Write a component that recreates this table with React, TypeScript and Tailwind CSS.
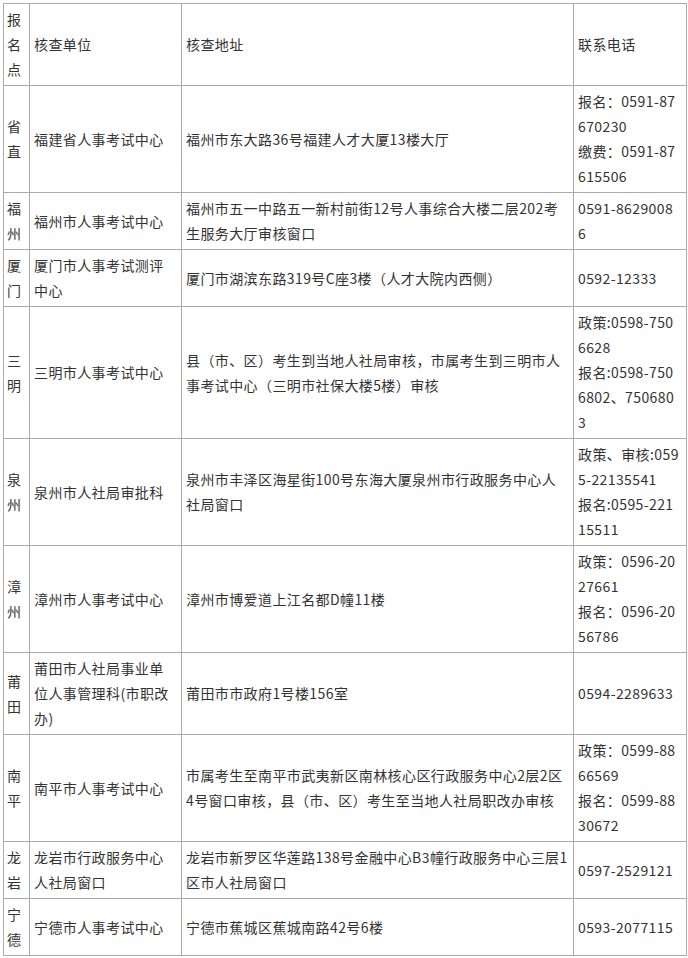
import React from 'react';

type Row = {
  city: string[];
  unit: string[];
  addr: string[];
  phone: string[];
};

const rows: Row[] = [
  {
    city: ['省', '直'],
    unit: ['福建省人事考试中心'],
    addr: ['福州市东大路36号福建人才大厦13楼大厅'],
    phone: ['报名：0591-87', '670230', '缴费：0591-87', '615506'],
  },
  {
    city: ['福', '州'],
    unit: ['福州市人事考试中心'],
    addr: ['福州市五一中路五一新村前街12号人事综合大楼二层202考', '生服务大厅审核窗口'],
    phone: ['0591-8629008', '6'],
  },
  {
    city: ['厦', '门'],
    unit: ['厦门市人事考试测评', '中心'],
    addr: ['厦门市湖滨东路319号C座3楼（人才大院内西侧）'],
    phone: ['0592-12333'],
  },
  {
    city: ['三', '明'],
    unit: ['三明市人事考试中心'],
    addr: ['县（市、区）考生到当地人社局审核，市属考生到三明市人', '事考试中心（三明市社保大楼5楼）审核'],
    phone: ['政策:0598-750', '6628', '报名:0598-750', '6802、750680', '3'],
  },
  {
    city: ['泉', '州'],
    unit: ['泉州市人社局审批科'],
    addr: ['泉州市丰泽区海星街100号东海大厦泉州市行政服务中心人', '社局窗口'],
    phone: ['政策、审核:059', '5-22135541', '报名:0595-221', '15511'],
  },
  {
    city: ['漳', '州'],
    unit: ['漳州市人事考试中心'],
    addr: ['漳州市博爱道上江名都D幢11楼'],
    phone: ['政策：0596-20', '27661', '报名：0596-20', '56786'],
  },
  {
    city: ['莆', '田'],
    unit: ['莆田市人社局事业单', '位人事管理科(市职改', '办)'],
    addr: ['莆田市市政府1号楼156室'],
    phone: ['0594-2289633'],
  },
  {
    city: ['南', '平'],
    unit: ['南平市人事考试中心'],
    addr: ['市属考生至南平市武夷新区南林核心区行政服务中心2层2区', '4号窗口审核，县（市、区）考生至当地人社局职改办审核'],
    phone: ['政策：0599-88', '66569', '报名：0599-88', '30672'],
  },
  {
    city: ['龙', '岩'],
    unit: ['龙岩市行政服务中心', '人社局窗口'],
    addr: ['龙岩市新罗区华莲路138号金融中心B3幢行政服务中心三层1', '区市人社局窗口'],
    phone: ['0597-2529121'],
  },
  {
    city: ['宁', '德'],
    unit: ['宁德市人事考试中心'],
    addr: ['宁德市蕉城区蕉城南路42号6楼'],
    phone: ['0593-2077115'],
  },
];

const Lines = ({ lines }: { lines: string[] }) => (
  <>
    {lines.map((l, i) => (
      <div key={i} className="whitespace-nowrap">
        {l}
      </div>
    ))}
  </>
);

const cell = 'border border-[#ababab] align-middle py-[3px] px-[4px]';
const firstCell = 'border border-[#ababab] align-middle py-[3px] pl-[3px] pr-0';

export default function App() {
  return (
    <div className="bg-white min-h-screen pl-[3px] pt-[3px] font-['Noto_Sans_CJK_SC',sans-serif] text-[14px] leading-[25px] tracking-[0.4px] text-[#333]">
      <table className="border-collapse table-fixed w-[683px]">
        <colgroup>
          <col className="w-[26px]" />
          <col className="w-[152px]" />
          <col className="w-[392px]" />
          <col className="w-[113px]" />
        </colgroup>
        <tbody>
          <tr>
            <td className={firstCell}>
              <Lines lines={['报', '名', '点']} />
            </td>
            <td className={cell}>核查单位</td>
            <td className={cell}>核查地址</td>
            <td className={cell}>联系电话</td>
          </tr>
          {rows.map((r, i) => (
            <tr key={i}>
              <td className={firstCell}>
                <Lines lines={r.city} />
              </td>
              <td className={cell}>
                <Lines lines={r.unit} />
              </td>
              <td className={cell}>
                <Lines lines={r.addr} />
              </td>
              <td className={cell}>
                <Lines lines={r.phone} />
              </td>
            </tr>
          ))}
        </tbody>
      </table>
    </div>
  );
}
